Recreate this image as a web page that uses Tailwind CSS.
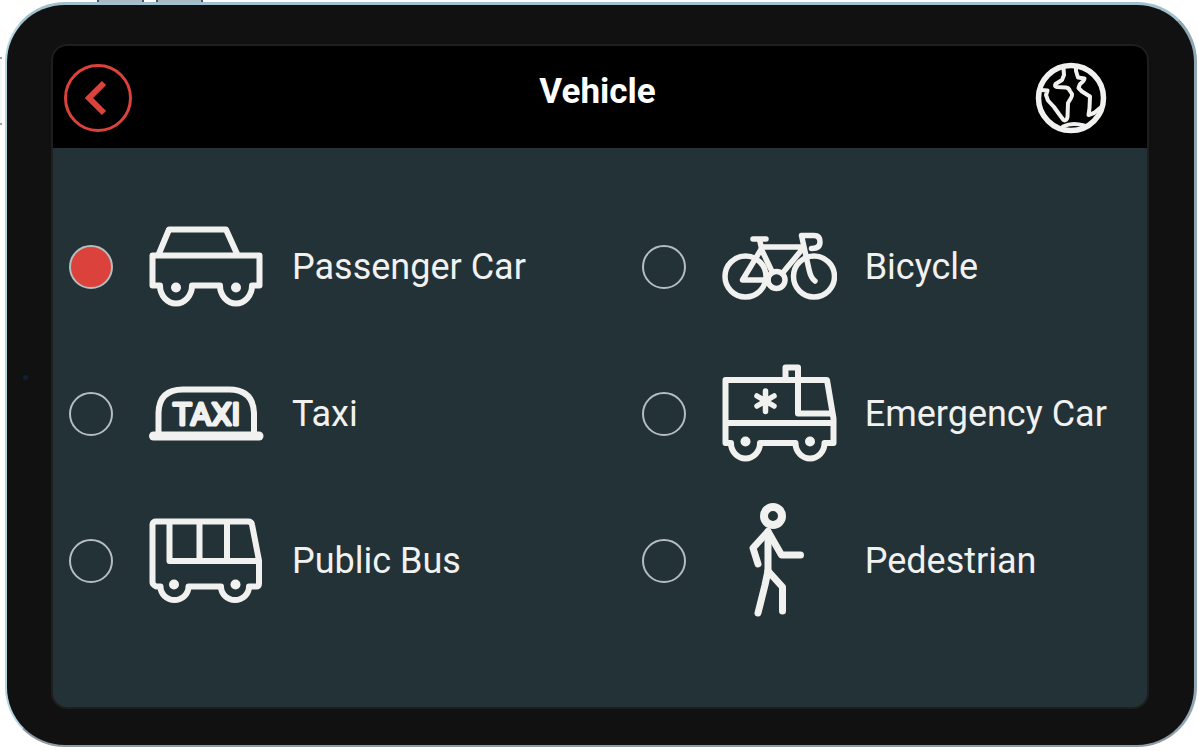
<!DOCTYPE html>
<html lang="en">
<head>
    <meta charset="UTF-8">
    <meta name="viewport" content="width=device-width, initial-scale=1.0">
    <title>Vehicle</title>
    <script src="https://cdn.jsdelivr.net/npm/@tailwindcss/browser@4"></script>
</head>
<body class="relative flex min-h-screen bg-white pt-[2px] pr-px pb-[4px] pl-[5px] font-['Roboto',sans-serif]">

    <!-- Device buttons -->
    <div class="absolute top-0 left-[97px] flex gap-3">
        <span class="h-[2px] w-[47px] border-x-2 border-gray-600 bg-[#a9b9c3]"></span>
        <span class="h-[2px] w-[47px] border-x-2 border-gray-600 bg-[#a9b9c3]"></span>
    </div>
    <div class="absolute top-[57px] left-0 h-[68px] w-[2px] border-y-2 border-gray-400 bg-[#f4f7fa]"></div>

    <!-- Tablet frame -->
    <div class="relative flex flex-1 rounded-[60px] border-t-3 border-r-3 border-b-2 border-l-2 border-t-[#a3c0ce] border-r-[#8fa6b3] border-b-[#8f9ba2] border-l-[#b5d3e1] bg-[#111111] pt-[39px] pr-[45px] pb-9 pl-11">
        <span class="absolute top-[370px] left-[16px] size-[5px] rounded-full bg-[#10203c]"></span>

        <div class="flex flex-1 flex-col overflow-hidden rounded-2xl border-2 border-[#1e1e1e] bg-[#233237]">

            <header class="grid grid-cols-[1fr_auto_1fr] items-center bg-black pt-4 pr-4 pb-[14px] pl-[11px]">
                <button type="button" aria-label="Back" class="flex size-[68px] items-center justify-center rounded-full border-[3px] border-[#db423c]">
                    <svg class="size-[62px] shrink-0" viewBox="0 0 62 62" fill="none" stroke="#db423c" stroke-width="6">
                        <path d="M37 16L22 31L37 46"/>
                    </svg>
                </button>
                <h1 class="pb-3 text-[35px] leading-[44px] font-bold text-white">Vehicle</h1>
                <button type="button" aria-label="Language" class="mr-6 size-[72px] justify-self-end">
                    <svg class="size-[72px]" viewBox="0 0 72 72" fill="none" stroke="#f1f1f0" stroke-width="4" stroke-linecap="round" stroke-linejoin="round">
                        <circle cx="36" cy="36" r="32.500" stroke-width="5.500"/>
                        <path d="M28.500 6L29 13L27 18L20.500 22Q19 24.500 22 25L31 25.500Q34 26 35 29L37 32Q37.500 34 36 36L33 41L32.500 55Q31.500 59.500 28.500 58L24 52L19 45L13 38.500L11 33L12.500 28.500L6 28"/>
                        <path d="M41 5.500V9L43 15.500L49.500 16.500Q49 19 45 22L43.500 26L47 29.500L55 34.500L54.500 46L53.500 53L59 51L65 46"/>
                        <path d="M28 64.500Q37 60 49 63.500"/>
                    </svg>
                </button>
            </header>

            <form class="grid flex-1 auto-rows-[147px] grid-cols-[17fr_15fr] content-start pt-[45px] pl-4 text-[36px] leading-[44px] whitespace-nowrap text-[#f1f1f0]">

                <label class="flex items-center">
                    <input type="radio" name="vehicle" value="car" checked class="mr-[35px] size-11 shrink-0 appearance-none rounded-full border-2 border-[#b4bdc0] checked:bg-[#db423c]">
                    <svg class="mr-7 size-[116px] shrink-0" viewBox="0 0 116 116" fill="none" stroke="#f1f1f0" stroke-width="6">
                        <path d="M4.500 46.500H111.500V76.500H104A16 18 0 0 1 72 76.500H44A16 18 0 0 1 12 76.500H4.500Z" stroke-linejoin="round"/>
                        <path d="M10 47L21 20.500H78L90 47" stroke-linejoin="round"/>
                        <g fill="#f1f1f0" stroke="none">
                            <circle cx="28" cy="78.500" r="5"/>
                            <circle cx="88" cy="78.500" r="5"/>
                        </g>
                    </svg>
                    Passenger Car
                </label>

                <label class="flex items-center">
                    <input type="radio" name="vehicle" value="bicycle" class="mr-[35px] size-11 shrink-0 appearance-none rounded-full border-2 border-[#b4bdc0] checked:bg-[#db423c]">
                    <svg class="mr-7 size-[116px] shrink-0" viewBox="0 0 116 116" fill="none" stroke="#f1f1f0" stroke-width="5.500" stroke-linecap="round" stroke-linejoin="round">
                        <circle cx="24.500" cy="67.500" r="20.500"/>
                        <circle cx="93" cy="67.500" r="20.500"/>
                        <circle cx="55.500" cy="71" r="8.500"/>
                        <path d="M32 30H45M38.500 30.500L41 41.500L51 62.500"/>
                        <path d="M47 71H21.500L40 40.500"/>
                        <path d="M41 38H81M81 40.500L62 63.500"/>
                        <path d="M94 72Q90 69.500 88 60.500L80.500 26.500H93Q99 26.500 99 33Q99 39.500 90.500 39.500"/>
                    </svg>
                    Bicycle
                </label>

                <label class="flex items-center">
                    <input type="radio" name="vehicle" value="taxi" class="mr-[35px] size-11 shrink-0 appearance-none rounded-full border-2 border-[#b4bdc0] checked:bg-[#db423c]">
                    <svg class="mr-7 size-[116px] shrink-0" viewBox="0 0 116 116" fill="none" stroke="#f1f1f0" stroke-width="6" stroke-linecap="round" stroke-linejoin="round">
                        <path d="M10.500 80V57Q11 33.500 35 33.500H81Q105 33.500 106 57V80"/>
                        <path d="M5.500 80H111" stroke-width="9"/>
                        <text x="58.500" y="68.500" class="font-['Liberation_Sans_Narrow','Roboto',sans-serif] text-[32px]" text-anchor="middle" fill="#f1f1f0" stroke-width="3">TAXI</text>
                    </svg>
                    Taxi
                </label>

                <label class="flex items-center">
                    <input type="radio" name="vehicle" value="emergency" class="mr-[35px] size-11 shrink-0 appearance-none rounded-full border-2 border-[#b4bdc0] checked:bg-[#db423c]">
                    <svg class="mr-7 size-[116px] shrink-0" viewBox="0 0 116 116" fill="none" stroke="#f1f1f0" stroke-width="6" stroke-linejoin="round">
                        <path d="M4.500 24H106L112.500 62.500V87H103.500A14.500 15.500 0 0 1 74.500 87H39A14.500 15.500 0 0 1 10 87H4.500Z"/>
                        <path d="M4 67H113M64.500 24V11.500H77V57.500H111"/>
                        <path d="M44.500 35V55.500M36 40L53 50M53 40L36 50" stroke-width="5.500" stroke-linecap="round"/>
                        <g fill="#f1f1f0" stroke="none">
                            <circle cx="24.500" cy="85.500" r="5"/>
                            <circle cx="89" cy="85.500" r="5"/>
                        </g>
                    </svg>
                    Emergency Car
                </label>

                <label class="flex items-center">
                    <input type="radio" name="vehicle" value="bus" class="mr-[35px] size-11 shrink-0 appearance-none rounded-full border-2 border-[#b4bdc0] checked:bg-[#db423c]">
                    <svg class="mr-7 size-[116px] shrink-0" viewBox="0 0 116 116" fill="none" stroke="#f1f1f0" stroke-width="6" stroke-linejoin="round">
                        <path d="M8 18.500H100Q103.500 18.500 104 21.500L111 57.500V80.500Q111 83.500 108 83.500H101A14 13.500 0 0 1 73 83.500H40.500A14 13.500 0 0 1 12.500 83.500H8Q4.500 81.500 4.500 79.500V21.500Q5 18.500 8 18.500Z"/>
                        <path d="M21.500 19V58H111M51.500 19V58M79 19V58"/>
                        <g fill="#f1f1f0" stroke="none">
                            <circle cx="26" cy="81.500" r="5"/>
                            <circle cx="87.500" cy="81.500" r="5"/>
                        </g>
                    </svg>
                    Public Bus
                </label>

                <label class="flex items-center">
                    <input type="radio" name="vehicle" value="pedestrian" class="mr-[35px] size-11 shrink-0 appearance-none rounded-full border-2 border-[#b4bdc0] checked:bg-[#db423c]">
                    <svg class="mr-7 size-[116px] shrink-0" viewBox="0 0 116 116" fill="none" stroke="#f1f1f0" stroke-width="7" stroke-linecap="round" stroke-linejoin="round">
                        <circle cx="52" cy="13" r="9" stroke-width="8"/>
                        <path d="M47 28.500V68L44 82L37 110"/>
                        <path d="M37 61L32 45L47 28.500L60.500 52H79.500"/>
                        <path d="M47 68L61.500 84V108"/>
                    </svg>
                    Pedestrian
                </label>

            </form>
        </div>
    </div>

</body>
</html>
